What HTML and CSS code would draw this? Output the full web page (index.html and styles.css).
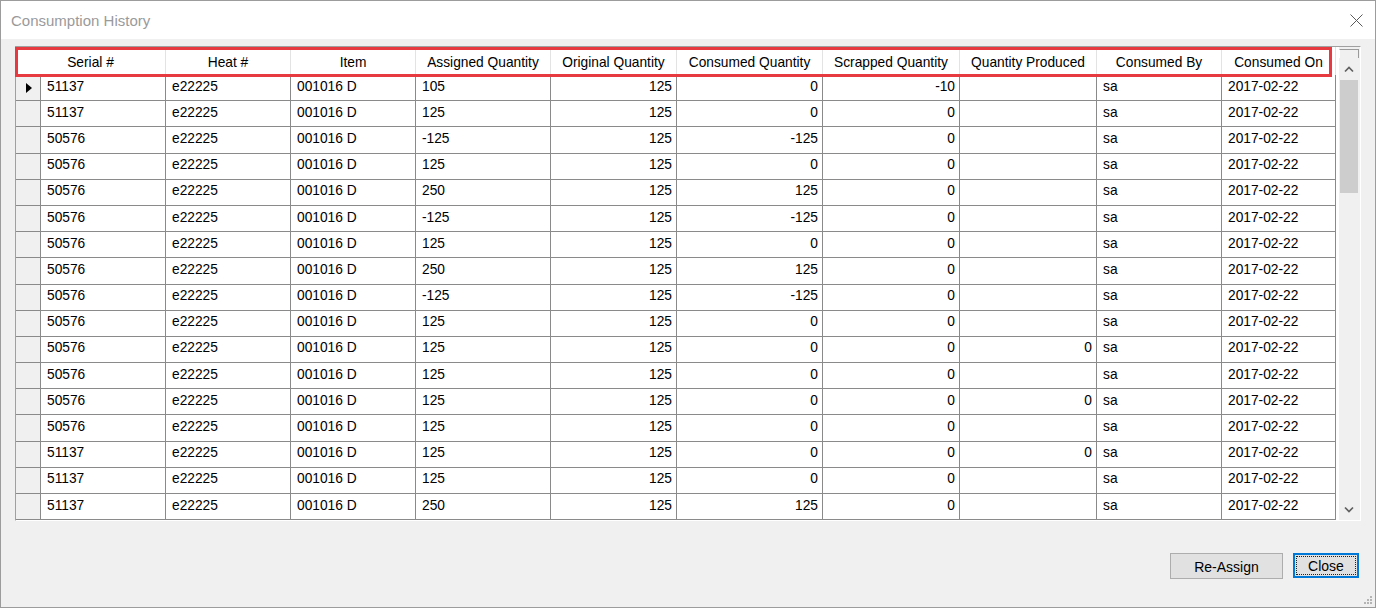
FILE: index.html
```html
<!DOCTYPE html>
<html lang="en">
<head>
    <meta charset="UTF-8">
    <title>Consumption History</title>
    <link rel="stylesheet" href="styles.css">
</head>
<body>
    <div class="window">
        <div class="titlebar">
            <span class="title">Consumption History</span>
            <span class="close-x">
                <svg width="13" height="13" viewBox="0 0 13 13"><path d="M0.5 0.5 L12.5 12.5 M12.5 0.5 L0.5 12.5" stroke="#5a5a5a" stroke-width="1" fill="none"/></svg>
            </span>
        </div>

        <div class="content">
            <div class="grid-wrap">
                <div class="grid">
                    <!-- header -->
                    <div class="row head">
                        <div class="hcell span2">Serial #</div>
                        <div class="hcell">Heat #</div>
                        <div class="hcell">Item</div>
                        <div class="hcell">Assigned Quantity</div>
                        <div class="hcell">Original Quantity</div>
                        <div class="hcell">Consumed Quantity</div>
                        <div class="hcell">Scrapped Quantity</div>
                        <div class="hcell">Quantity Produced</div>
                        <div class="hcell">Consumed By</div>
                        <div class="hcell">Consumed On</div>
                    </div>

                    <div class="row">
                        <div class="cell rh"><span class="current"></span></div>
                        <div class="cell">51137</div><div class="cell">e22225</div><div class="cell">001016 D</div>
                        <div class="cell">105</div><div class="cell num">125</div><div class="cell num">0</div>
                        <div class="cell num">-10</div><div class="cell num"></div>
                        <div class="cell">sa</div><div class="cell">2017-02-22</div>
                    </div>
                    <div class="row">
                        <div class="cell rh"></div>
                        <div class="cell">51137</div><div class="cell">e22225</div><div class="cell">001016 D</div>
                        <div class="cell">125</div><div class="cell num">125</div><div class="cell num">0</div>
                        <div class="cell num">0</div><div class="cell num"></div>
                        <div class="cell">sa</div><div class="cell">2017-02-22</div>
                    </div>
                    <div class="row">
                        <div class="cell rh"></div>
                        <div class="cell">50576</div><div class="cell">e22225</div><div class="cell">001016 D</div>
                        <div class="cell">-125</div><div class="cell num">125</div><div class="cell num">-125</div>
                        <div class="cell num">0</div><div class="cell num"></div>
                        <div class="cell">sa</div><div class="cell">2017-02-22</div>
                    </div>
                    <div class="row">
                        <div class="cell rh"></div>
                        <div class="cell">50576</div><div class="cell">e22225</div><div class="cell">001016 D</div>
                        <div class="cell">125</div><div class="cell num">125</div><div class="cell num">0</div>
                        <div class="cell num">0</div><div class="cell num"></div>
                        <div class="cell">sa</div><div class="cell">2017-02-22</div>
                    </div>
                    <div class="row">
                        <div class="cell rh"></div>
                        <div class="cell">50576</div><div class="cell">e22225</div><div class="cell">001016 D</div>
                        <div class="cell">250</div><div class="cell num">125</div><div class="cell num">125</div>
                        <div class="cell num">0</div><div class="cell num"></div>
                        <div class="cell">sa</div><div class="cell">2017-02-22</div>
                    </div>
                    <div class="row">
                        <div class="cell rh"></div>
                        <div class="cell">50576</div><div class="cell">e22225</div><div class="cell">001016 D</div>
                        <div class="cell">-125</div><div class="cell num">125</div><div class="cell num">-125</div>
                        <div class="cell num">0</div><div class="cell num"></div>
                        <div class="cell">sa</div><div class="cell">2017-02-22</div>
                    </div>
                    <div class="row">
                        <div class="cell rh"></div>
                        <div class="cell">50576</div><div class="cell">e22225</div><div class="cell">001016 D</div>
                        <div class="cell">125</div><div class="cell num">125</div><div class="cell num">0</div>
                        <div class="cell num">0</div><div class="cell num"></div>
                        <div class="cell">sa</div><div class="cell">2017-02-22</div>
                    </div>
                    <div class="row">
                        <div class="cell rh"></div>
                        <div class="cell">50576</div><div class="cell">e22225</div><div class="cell">001016 D</div>
                        <div class="cell">250</div><div class="cell num">125</div><div class="cell num">125</div>
                        <div class="cell num">0</div><div class="cell num"></div>
                        <div class="cell">sa</div><div class="cell">2017-02-22</div>
                    </div>
                    <div class="row">
                        <div class="cell rh"></div>
                        <div class="cell">50576</div><div class="cell">e22225</div><div class="cell">001016 D</div>
                        <div class="cell">-125</div><div class="cell num">125</div><div class="cell num">-125</div>
                        <div class="cell num">0</div><div class="cell num"></div>
                        <div class="cell">sa</div><div class="cell">2017-02-22</div>
                    </div>
                    <div class="row">
                        <div class="cell rh"></div>
                        <div class="cell">50576</div><div class="cell">e22225</div><div class="cell">001016 D</div>
                        <div class="cell">125</div><div class="cell num">125</div><div class="cell num">0</div>
                        <div class="cell num">0</div><div class="cell num"></div>
                        <div class="cell">sa</div><div class="cell">2017-02-22</div>
                    </div>
                    <div class="row">
                        <div class="cell rh"></div>
                        <div class="cell">50576</div><div class="cell">e22225</div><div class="cell">001016 D</div>
                        <div class="cell">125</div><div class="cell num">125</div><div class="cell num">0</div>
                        <div class="cell num">0</div><div class="cell num">0</div>
                        <div class="cell">sa</div><div class="cell">2017-02-22</div>
                    </div>
                    <div class="row">
                        <div class="cell rh"></div>
                        <div class="cell">50576</div><div class="cell">e22225</div><div class="cell">001016 D</div>
                        <div class="cell">125</div><div class="cell num">125</div><div class="cell num">0</div>
                        <div class="cell num">0</div><div class="cell num"></div>
                        <div class="cell">sa</div><div class="cell">2017-02-22</div>
                    </div>
                    <div class="row">
                        <div class="cell rh"></div>
                        <div class="cell">50576</div><div class="cell">e22225</div><div class="cell">001016 D</div>
                        <div class="cell">125</div><div class="cell num">125</div><div class="cell num">0</div>
                        <div class="cell num">0</div><div class="cell num">0</div>
                        <div class="cell">sa</div><div class="cell">2017-02-22</div>
                    </div>
                    <div class="row">
                        <div class="cell rh"></div>
                        <div class="cell">50576</div><div class="cell">e22225</div><div class="cell">001016 D</div>
                        <div class="cell">125</div><div class="cell num">125</div><div class="cell num">0</div>
                        <div class="cell num">0</div><div class="cell num"></div>
                        <div class="cell">sa</div><div class="cell">2017-02-22</div>
                    </div>
                    <div class="row">
                        <div class="cell rh"></div>
                        <div class="cell">51137</div><div class="cell">e22225</div><div class="cell">001016 D</div>
                        <div class="cell">125</div><div class="cell num">125</div><div class="cell num">0</div>
                        <div class="cell num">0</div><div class="cell num">0</div>
                        <div class="cell">sa</div><div class="cell">2017-02-22</div>
                    </div>
                    <div class="row">
                        <div class="cell rh"></div>
                        <div class="cell">51137</div><div class="cell">e22225</div><div class="cell">001016 D</div>
                        <div class="cell">125</div><div class="cell num">125</div><div class="cell num">0</div>
                        <div class="cell num">0</div><div class="cell num"></div>
                        <div class="cell">sa</div><div class="cell">2017-02-22</div>
                    </div>
                    <div class="row">
                        <div class="cell rh"></div>
                        <div class="cell">51137</div><div class="cell">e22225</div><div class="cell">001016 D</div>
                        <div class="cell">250</div><div class="cell num">125</div><div class="cell num">125</div>
                        <div class="cell num">0</div><div class="cell num"></div>
                        <div class="cell">sa</div><div class="cell">2017-02-22</div>
                    </div>
                </div>

                <!-- vertical scrollbar -->
                <div class="vscroll">
                    <div class="vs-cap"><div class="vs-cap-box"></div></div>
                    <div class="vs-btn">
                        <svg width="10" height="7" viewBox="0 0 10 7"><polyline points="1,5.5 5,1.5 9,5.5" stroke="#606060" stroke-width="1.7" fill="none"/></svg>
                    </div>
                    <div class="vs-track"><div class="vs-thumb"></div></div>
                    <div class="vs-btn">
                        <svg width="10" height="7" viewBox="0 0 10 7"><polyline points="1,1.5 5,5.5 9,1.5" stroke="#606060" stroke-width="1.7" fill="none"/></svg>
                    </div>
                </div>
            </div>

            <div class="actions">
                <button class="btn reassign">Re-Assign</button>
                <button class="btn close focused">Close</button>
            </div>
        </div>

        <!-- annotation box around the column headers -->
        <div class="highlight"></div>

        <div class="grip">
            <svg width="10" height="10" viewBox="0 0 10 10" fill="#b4b4b4">
                <rect x="7" y="1" width="2" height="2"/>
                <rect x="4" y="4" width="2" height="2"/><rect x="7" y="4" width="2" height="2"/>
                <rect x="1" y="7" width="2" height="2"/><rect x="4" y="7" width="2" height="2"/><rect x="7" y="7" width="2" height="2"/>
            </svg>
        </div>
    </div>
</body>
</html>
```

FILE: styles.css
```css
* {
    margin: 0;
    padding: 0;
    box-sizing: border-box;
}

body {
    font-family: "Liberation Sans", Arial, sans-serif;
    background: #ffffff;
    width: 1377px;
    height: 609px;
    overflow: hidden;
}

.window {
    position: relative;
    width: 1376px;
    height: 608px;
    border: 1px solid #9c9c9c;
    background: #f0f0f0;
    display: flex;
    flex-direction: column;
}

.titlebar {
    height: 38px;
    background: #ffffff;
    display: flex;
    align-items: center;
    justify-content: space-between;
    padding: 0 12px 0 10px;
}

.title {
    font-size: 15px;
    color: #9a9a9a;
}

.close-x {
    display: flex;
    margin-top: 1px;
}

.content {
    flex: 1;
    padding: 7px 14px 0 14px;
}

.grid-wrap {
    width: 1346px;
    height: 475px;
    border: 1px solid;
    border-color: #a0a0a0 #ffffff #ffffff #a0a0a0;
    background: #ffffff;
    display: flex;
}

.grid {
    width: 1323px;
    height: 473px;
    overflow: hidden;
}

.row {
    display: grid;
    grid-template-columns: 25px 125px 125px 125px 135px 126px 146px 137px 137px 125px 114px;
    height: 26.2px;
    font-size: 13.75px;
    color: #000000;
}

.row.head {
    height: 28px;
    background: #ffffff;
}

.hcell {
    display: flex;
    align-items: center;
    justify-content: center;
    border-right: 1px solid #e3e3e3;
    white-space: nowrap;
    overflow: hidden;
    padding-top: 2px;
}

.hcell.span2 {
    grid-column: span 2;
}

.cell {
    display: flex;
    align-items: center;
    padding: 0 4px 3px 6px;
    border-right: 1px solid #8a8a8a;
    border-bottom: 1px solid #8a8a8a;
    white-space: nowrap;
    overflow: hidden;
    background: #ffffff;
}

.cell.num {
    justify-content: flex-end;
}

.cell.rh {
    background: #f0f0f0;
    padding: 0 0 0 10px;
}

.current {
    width: 0;
    height: 0;
    border-left: 6px solid #000000;
    border-top: 5px solid transparent;
    border-bottom: 5px solid transparent;
}

/* scrollbar */
.vscroll {
    width: 21px;
    height: 473px;
    display: flex;
    flex-direction: column;
    background: #f0f0f0;
}

.vs-cap {
    height: 11px;
    padding: 2px 1px 0 0;
}

.vs-cap-box {
    height: 9px;
    border-top: 1px solid #9a9a9a;
    border-right: 1px solid #9a9a9a;
    border-left: 1px solid #ffffff;
}

.vs-btn {
    height: 22px;
    display: flex;
    align-items: center;
    justify-content: center;
    padding-right: 1px;
}

.vs-track {
    flex: 1;
}

.vs-thumb {
    height: 113px;
    margin: 0 2px 0 1px;
    background: #cdcdcd;
}

/* buttons */
.actions {
    display: flex;
    justify-content: flex-end;
    gap: 10px;
    margin-top: 32px;
    padding-right: 2px;
}

.btn {
    font-family: "Liberation Sans", Arial, sans-serif;
    font-size: 14px;
    color: #000000;
    background: #e1e1e1;
    border: 1px solid #adadad;
    height: 26px;
    padding-top: 1px;
}

.btn.reassign {
    width: 113px;
}

.btn.close {
    width: 66px;
    height: 25px;
    position: relative;
    border: 2px solid #0078d7;
}

.btn.focused::after {
    content: "";
    position: absolute;
    inset: 1px;
    border: 1px dotted #222222;
}

.highlight {
    position: absolute;
    left: 14px;
    top: 46px;
    width: 1317px;
    height: 30px;
    border: 3px solid #e63a40;
}

.grip {
    position: absolute;
    right: 2px;
    bottom: 2px;
    display: flex;
}
```
